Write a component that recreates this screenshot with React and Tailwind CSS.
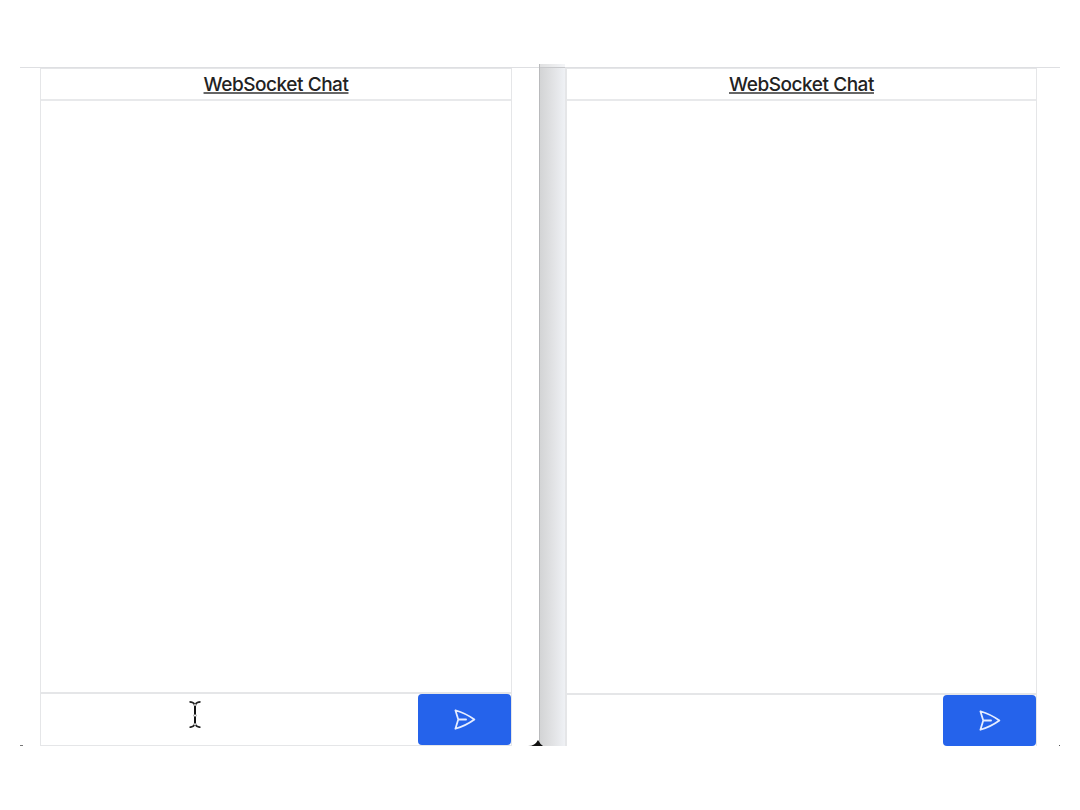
import React from "react";

function SendIcon() {
  return (
    <svg viewBox="0 0 24 24" className="h-[25px] w-[25px]" fill="none" stroke="#e6edff" strokeWidth="1.7" strokeLinecap="round" strokeLinejoin="round">
      <path d="M6 12L3.269 3.126A59.768 59.768 0 0121.485 12 59.77 59.77 0 013.27 20.876L5.999 12zm0 0h7.5" />
    </svg>
  );
}

function TextCursor() {
  return (
    <svg viewBox="0 0 14 28" className="pointer-events-none absolute left-[147px] top-[6px] h-7 w-3.5" fill="none">
      <path d="M1.5 1.9Q5 1.9 7 4.7Q9 1.9 12.5 1.9M1.5 27.3Q5 27.3 7 24.5Q9 27.3 12.5 27.3" stroke="#222" strokeWidth="1.6" />
      <path d="M7 4.5V24.5" stroke="#111" strokeWidth="2" />
      <g fill="#fff" stroke="#333" strokeWidth="0.5">
        <circle cx="7" cy="4.9" r="1.2" />
        <circle cx="7" cy="15.5" r="1.3" />
        <circle cx="7" cy="24.3" r="1.2" />
      </g>
    </svg>
  );
}

function Chat({ className, cursor }) {
  return (
    <section className={`flex flex-col border-[#e5e6e8] ${className}`}>
      <header className="flex h-8 shrink-0 items-center justify-center border-b-2 border-[#e8e9eb] pt-0.5">
        <h1 className="font-['Inter',sans-serif] text-[19px] font-medium leading-7 tracking-[-0.45px] text-[#222] underline decoration-[#666] decoration-2 underline-offset-1 [text-decoration-skip-ink:none]">
          WebSocket Chat
        </h1>
      </header>
      <div className="flex-1" />
      <form className="relative flex h-[53px] shrink-0 border-t-2 border-[#e5e6e8]" onSubmit={(e) => e.preventDefault()}>
        <input aria-label="Message" className="min-w-0 flex-1 bg-transparent px-3 outline-none" />
        {cursor && <TextCursor />}
        <button aria-label="Send" className="flex h-[51px] w-[93px] items-center justify-center rounded-[4px] bg-[#2563eb]">
          <SendIcon />
        </button>
      </form>
    </section>
  );
}

export default function App() {
  return (
    <main className="h-[810px] w-[1080px] bg-white px-5 pt-16">
      <div className="flex h-[682px] overflow-hidden">
        <div className="relative flex w-[519px] pl-5 pt-[3px]">
          <div className="absolute left-0 right-0 top-[3px] h-px bg-[#dedfe2]" />
          <Chat className="w-[472px] border-x border-b border-t-2" cursor />
          <svg viewBox="0 0 15 6" className="absolute bottom-0 -right-[4px] z-10 h-1.5 w-[15px]">
            <path d="M0 6Q7 6 10 0Q12 4 15 6Z" fill="#111" />
          </svg>
          <div className="absolute bottom-0 left-0 h-px w-[3px] bg-[#777]" />
        </div>
        <div className="relative w-[26px] border-l border-[#b9babc] bg-linear-to-r from-[#d3d4d5] via-[#e1e2e4] to-[#eff1f5]">
          <div className="absolute left-0 right-0 top-0 h-[3px] bg-white/30" />
          <div className="absolute left-0 right-0 top-[3px] h-px bg-[#c8c9cc]" />
        </div>
        <div className="relative flex flex-1 pt-[3px]">
          <div className="absolute left-0 right-0 top-[3px] h-px bg-[#dedfe2]" />
          <Chat className="w-[472px] border-r border-l-2 border-t-2" cursor={false} />
          <div className="absolute bottom-0 right-0 h-px w-px bg-[#555]" />
        </div>
      </div>
    </main>
  );
}
